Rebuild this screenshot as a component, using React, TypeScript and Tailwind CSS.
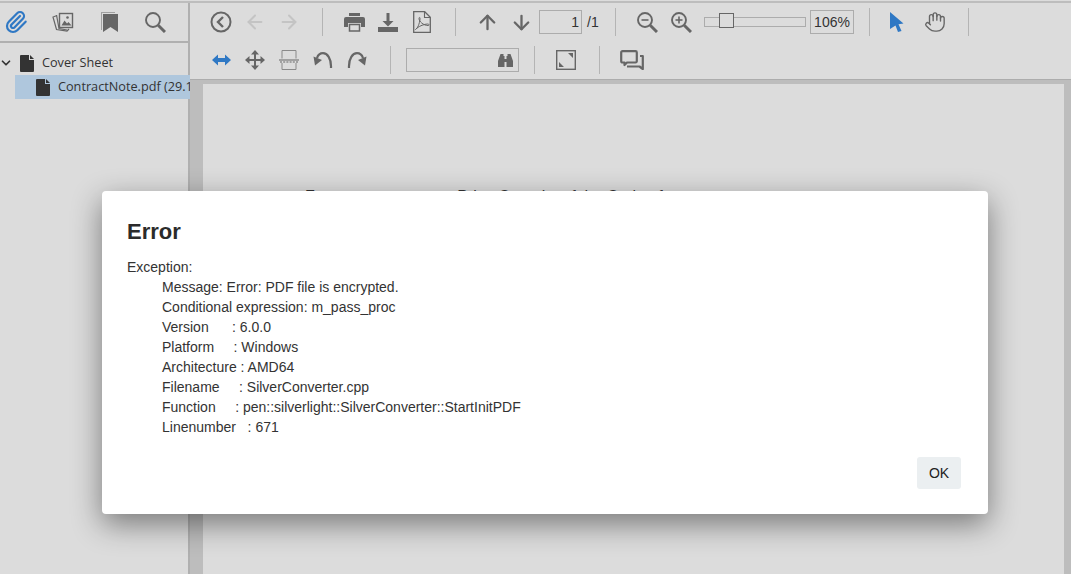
import React from "react";
import { ArrowDown, ArrowLeft, ArrowRight, ArrowUp, ChevronDown, Hand, Paperclip } from "lucide-react";

const GRAY = "#666666";
const BLUE = "#2f78c4";

const Btn = ({ children, className = "" }: { children: React.ReactNode; className?: string }) => (
  <div className={`w-[34px] h-full flex items-center justify-center shrink-0 ${className}`}>{children}</div>
);

const Sep = ({ className = "ml-[16px] mr-[14px]" }: { className?: string }) => (
  <div className={`w-px h-[28px] bg-[#b4b4b4] shrink-0 ${className}`} />
);

const FileIcon = () => (
  <svg width="14" height="17" viewBox="0 0 14 17">
    <path d="M1 0h8v5h5v11a1 1 0 0 1-1 1H1a1 1 0 0 1-1-1V1a1 1 0 0 1 1-1zM10 0l4 4h-4z" fill="#333333" />
  </svg>
);

const Images = () => (
  <svg width="22" height="20" viewBox="0 0 22 20" fill="none" stroke={GRAY}>
    <path d="M5 3.500 1 5l3.500 12.500L15 19l2-2" strokeWidth="1.200" />
    <path d="M4.500 3 7 16.500l8 1.500" strokeWidth="1.200" />
    <rect x="7.500" y="1.500" width="13" height="14" fill="#dcdcdc" strokeWidth="1.400" />
    <circle cx="15.500" cy="5.500" r="1.300" fill={GRAY} stroke="none" />
    <path d="M9.500 13.500l3-5 2.500 3 1.500-1.500 3 3.500z" fill={GRAY} stroke="none" />
  </svg>
);

const Bookmark = () => (
  <svg width="17" height="20" viewBox="0 0 17 20">
    <path d="M0 0h14v1H1v17H0z" fill="#a0a0a0" />
    <path d="M2 2h15v18l-7.500-5L2 20z" fill={GRAY} />
  </svg>
);

// magnifier with the thick handle of the viewer's icon set
const Magnifier = ({ mark }: { mark?: "plus" | "minus" }) => (
  <svg width="21" height="21" viewBox="0 0 21 21" fill="none" stroke={GRAY}>
    <circle cx="8" cy="8" r="7" strokeWidth="1.900" />
    <path d="M13.200 13.200 20 20" strokeWidth="3" />
    {mark && <path d="M4.500 8h7" strokeWidth="1.600" />}
    {mark === "plus" && <path d="M8 4.500v7" strokeWidth="1.600" />}
  </svg>
);

const CircleBack = () => (
  <svg width="22" height="22" viewBox="0 0 22 22" fill="none" stroke={GRAY} strokeWidth="2">
    <circle cx="11" cy="11" r="9.500" />
    <path d="M13 6l-5 5 5 5" strokeWidth="2.400" />
  </svg>
);

const Printer = () => (
  <svg width="21" height="19" viewBox="0 0 21 19">
    <path d="M5 0h11v3H5z" fill={GRAY} />
    <path d="M2 4h17a2 2 0 0 1 2 2v8h-4v-4H4v4H0V6a2 2 0 0 1 2-2z" fill={GRAY} />
    <path d="M5.500 11.500h10v6.500h-10z" fill="none" stroke={GRAY} strokeWidth="1.500" />
  </svg>
);

const Download = () => (
  <svg width="20" height="19" viewBox="0 0 20 19">
    <path d="M8.500 0h3v8h4L10 13.500 4.500 8h4z" fill={GRAY} />
    <path d="M0 14h20v5H0z" fill={GRAY} />
  </svg>
);

const PdfFile = () => (
  <svg width="18" height="22" viewBox="0 0 18 22" fill="none" stroke={GRAY}>
    <path d="M.7.700h11l5.600 5.600v15H.7z" strokeWidth="1.300" />
    <path d="M11.500 1v5.500h5.500" strokeWidth="1.100" />
    <path d="M2.500 18.500c2-1 4-5.500 4.500-10.500.2-2-1-2-1-.5 0 3 4.500 7 9 7 1.500 0 1.500-1.500-.5-1.500-3 0-8 2-10.500 4z" strokeWidth="1" />
  </svg>
);

const Pointer = () => (
  <svg width="14" height="20" viewBox="0 0 14 20">
    <path d="M0 0l13.500 11.500-5 .800 3 6.700-3.500 1-2.500-6.500L0 17z" fill={BLUE} />
  </svg>
);

const HArrows = () => (
  <svg width="19" height="12" viewBox="0 0 19 12" fill={BLUE}>
    <path d="M0 6l6-5.500V4h7V.500L19 6l-6 5.500V8H6v3.500z" />
  </svg>
);

const MoveIcon = () => (
  <svg width="20" height="20" viewBox="0 0 20 20" fill={GRAY}>
    <path d="M10 0l4 4.500h-3v4.500h4.500V6l4.500 4-4.500 4v-3H11v4.500h3L10 20l-4-4.500h3V11H4.500v3L0 10l4.500-4v3H9V4.500H6z" />
  </svg>
);

const FitHeight = () => (
  <svg width="20" height="20" viewBox="0 0 20 20" fill="none" stroke="#8a8a8a" strokeWidth="1">
    <path d="M3 8.500V.5M17 8.500V.5M3 .5h14" />
    <path d="M3 13v6.500M17 13v6.500M3 19.500h14" />
    <path d="M0 10h20" stroke="#666666" />
    <path d="M1 12h18" stroke="#666666" strokeDasharray="2 1.200" />
  </svg>
);

const Undo = ({ flip = false }: { flip?: boolean }) => (
  <svg width="20" height="16" viewBox="0 0 20 16" className={flip ? "-scale-x-100" : ""}>
    <path d="M18 16C18.500 6 14 1.200 10 1.200 7 1.200 5 3 4 6" fill="none" stroke={GRAY} strokeWidth="2.200" />
    <path d="M.5 4.500 9 8 2 13.500z" fill={GRAY} />
  </svg>
);

const Binoculars = () => (
  <svg width="15" height="13" viewBox="0 0 15 13" fill={GRAY}>
    <path d="M2.500 0h3v2h1v11H0V7zM9.500 0h3L15 7v6H8.500V2h1z" />
    <path d="M6 5h3v3H6z" />
  </svg>
);

const Fullscreen = () => (
  <svg width="20" height="20" viewBox="0 0 20 20">
    <rect x=".7" y=".7" width="18.600" height="18.600" fill="none" stroke={GRAY} strokeWidth="1.400" />
    <path d="M12 3h5v5zM3 12l5 5H3z" fill={GRAY} />
  </svg>
);

const Comments = () => (
  <svg width="24" height="20" viewBox="0 0 24 20" fill="none" stroke={GRAY} strokeWidth="2.200" strokeLinejoin="round">
    <path d="M4.500 15V12.500H2.500a1.300 1.300 0 0 1-1.300-1.300V2.500a1.300 1.300 0 0 1 1.300-1.300h13a1.300 1.300 0 0 1 1.300 1.300V11a1.300 1.300 0 0 1-1.300 1.500H7z" />
    <path d="M20 6h2.800v13l-3.300-2.500H7" />
  </svg>
);

const Toolbar = () => (
  <div className="flex-1 min-w-0 h-full flex flex-col">
    <div className="h-[38px] flex items-center pl-[14px]">
      <Btn><CircleBack /></Btn>
      <Btn><ArrowLeft size={22} color="#c4c4c4" strokeWidth={2.200} /></Btn>
      <Btn><ArrowRight size={22} color="#c4c4c4" strokeWidth={2.200} /></Btn>
      <Sep />
      <Btn><Printer /></Btn>
      <Btn><Download /></Btn>
      <Btn><PdfFile /></Btn>
      <Sep />
      <Btn><ArrowUp size={23} color={GRAY} strokeWidth={2.400} /></Btn>
      <Btn><ArrowDown size={23} color={GRAY} strokeWidth={2.400} /></Btn>
      <div className="w-[43px] h-[24px] ml-px border border-[#acacac] text-right pr-[2px] text-[14px] leading-[22px] text-[#333] shrink-0">1</div>
      <div className="w-[17px] pl-[5px] text-[14px] text-[#333] whitespace-nowrap shrink-0">/1</div>
      <Sep />
      <Btn><Magnifier mark="minus" /></Btn>
      <Btn><Magnifier mark="plus" /></Btn>
      <div className="relative w-[102px] h-[10px] ml-[6px] border border-[#acacac] shrink-0">
        <div className="absolute left-[14px] top-[-5px] w-[15px] h-[15px] border border-[#666] bg-[#dcdcdc]" />
      </div>
      <div className="w-[44px] h-[24px] ml-[4px] border border-[#acacac] text-center text-[14px] leading-[22px] text-[#333] shrink-0">106%</div>
      <Sep className="ml-[15px] mr-[10px]" />
      <Btn><Pointer /></Btn>
      <Btn className="ml-[4px]"><Hand size={22} color={GRAY} strokeWidth={1.500} /></Btn>
      <Sep />
    </div>
    <div className="h-[38px] flex items-center pl-[14px]">
      <Btn><HArrows /></Btn>
      <Btn><MoveIcon /></Btn>
      <Btn><FitHeight /></Btn>
      <Btn><Undo /></Btn>
      <Btn><Undo flip /></Btn>
      <Sep className="ml-[16px]" />
      <div className="w-[113px] h-[24px] ml-[15px] border border-[#acacac] flex items-center justify-end pr-[5px] shrink-0"><Binoculars /></div>
      <Sep className="ml-[15px] mr-[14px]" />
      <Btn><Fullscreen /></Btn>
      <Sep className="ml-[16px]" />
      <Btn className="ml-[15px]"><Comments /></Btn>
    </div>
  </div>
);

const Sidebar = () => (
  <div className="w-[190px] shrink-0 h-full border-r-2 border-[#b0b0b0] font-['Open_Sans',sans-serif]">
    <div className="h-[38px] flex items-center border-b-2 border-[#b0b0b0] box-content">
      <div className="w-[32px] mr-[8px] flex justify-center"><Paperclip size={24} color={BLUE} strokeWidth={2.200} /></div>
      <div className="w-[46px] flex justify-center"><Images /></div>
      <div className="w-[46px] flex justify-center"><Bookmark /></div>
      <div className="w-[46px] flex justify-center"><Magnifier /></div>
    </div>
    <div className="pt-[8px] text-[12.7px] text-[#333]">
      <div className="h-[24px] flex items-center">
        <ChevronDown size={14} color="#333" strokeWidth={3} className="ml-[-1px] shrink-0" />
        <div className="ml-[7px] shrink-0 flex"><FileIcon /></div>
        <span className="ml-[8px] whitespace-nowrap">Cover Sheet</span>
      </div>
      <div className="h-[24px] w-[175px] ml-[15px] bg-[#afc7dd] flex items-center overflow-hidden">
        <div className="ml-[21px] shrink-0 flex"><FileIcon /></div>
        <span className="ml-[8px] whitespace-nowrap">ContractNote.pdf (29.1 KB)</span>
      </div>
    </div>
  </div>
);

const lines = [
  "Message: Error: PDF file is encrypted.",
  "Conditional expression: m_pass_proc",
  "Version      : 6.0.0",
  "Platform     : Windows",
  "Architecture : AMD64",
  "Filename     : SilverConverter.cpp",
  "Function     : pen::silverlight::SilverConverter::StartInitPDF",
  "Linenumber   : 671",
];

const ErrorDialog = () => (
  <div className="absolute left-[102px] top-[191px] w-[886px] h-[323px] bg-white rounded-[4px] shadow-[0_10px_30px_rgba(0,0,0,0.45)] pl-[25px] pr-[27px] pt-[28px] font-['Liberation_Sans',sans-serif] text-[#333]">
    <h2 className="text-[22px] leading-[26px] font-bold text-[#2b2b2b]">Error</h2>
    <div className="mt-[12px] text-[14px] leading-[20px]">
      <div>Exception:</div>
      <div className="pl-[35px] whitespace-pre">
        {lines.map((l) => (
          <div key={l}>{l}</div>
        ))}
      </div>
    </div>
    <div className="absolute right-[27px] bottom-[25px] w-[44px] h-[32px] bg-[#ebeff1] rounded-[3px] flex items-center justify-center text-[14px] text-[#222]">OK</div>
  </div>
);

export default function App() {
  return (
    <div className="relative w-full h-screen overflow-hidden bg-[#dcdcdc] font-['Liberation_Sans',sans-serif]">
      <div className="h-[3px] border-b-2 border-[#bdbdbd] box-border bg-[#dcdcdc]" />
      <div className="flex h-[571px]">
        <Sidebar />
        <div className="flex-1 min-w-0 flex flex-col">
          <div className="h-[76px] shrink-0 border-b border-[#acacac] box-content">
            <Toolbar />
          </div>
          <div className="flex-1 min-h-0 bg-[#bdbdbd] pl-[13px] pr-[7px] pt-[4px]">
            <div className="h-full bg-[#dcdcdc] pt-[101px] text-[16px] text-[#333] flex">
              <span className="ml-[102px]">Form</span>
              <span className="ml-[115px] whitespace-nowrap">Price Quantity of the Option for</span>
            </div>
          </div>
        </div>
      </div>
      <ErrorDialog />
    </div>
  );
}
